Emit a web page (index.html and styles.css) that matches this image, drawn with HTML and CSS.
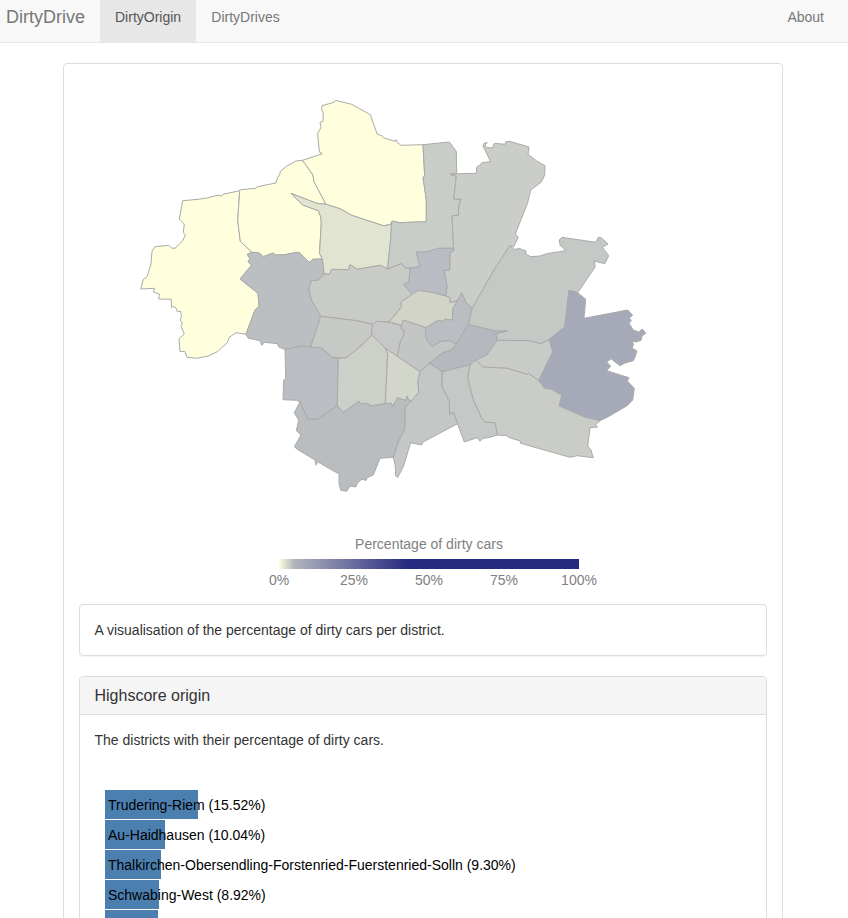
FILE: index.html
```html
<!DOCTYPE html>
<html lang="en">
<head>
<meta charset="utf-8">
<title>DirtyDrive</title>
<link rel="stylesheet" href="styles.css">
</head>
<body>
<nav class="navbar">
  <a class="brand">DirtyDrive</a>
  <a class="nav-item active">DirtyOrigin</a>
  <a class="nav-item">DirtyDrives</a>
  <a class="nav-item about">About</a>
</nav>
<main class="card">
  <svg class="map" viewBox="79 79 688 450" width="688" height="450">
    <path fill="#ffffdd" d="M182.7 200.7 179.3 219.3 184.3 224 183.3 232.7 185.5 234.7 182.7 240.7 175 248.3 171.7 248 168.7 245.3 155 246.7 152 251.3 151 264 147 276.7 143.3 279.3 140.7 289 154.7 288.3 153.3 292 159.3 294 158.7 299 171.3 299.3 171.3 307.3 173.5 306.5 176 308 177.3 311.7 180.7 311.3 181.3 316.7 180.3 320 182.7 324 180.7 325.3 184.3 334 179 338.7 180 351.7 184.7 351.3 187 357.3 196.7 358.3 208.3 356 217.3 351.7 227.3 342.7 229.3 337.3 236 332.7 246 334.3 255 310 259 306 258 293.3 240 279 251.7 265 248 261.7 250 258.7 247.3 254.3 252 252.3 240.3 241.3 237.7 220.7 239.7 190.7 223 194.3 221.7 196 217.3 195.3 207 198 198.3 199.3Z"/>
    <path fill="#ffffdd" d="M239.7 190.7 240.7 189.7 255.3 188.3 257.3 186.7 276 183 277.7 177.3 279.7 174.5 280.3 171.3 287 166 296 161 302.5 160.3 313 175 314 181.7 326 204.3 316.7 203.3 291 193.3 302.7 205 318.3 210.7 320.7 216.7 321.3 223 319.5 253.3 322.3 259 313.3 259.3 309.3 262.3 299.3 252.3 293.3 253 285 254.7 275 255 273.3 253 263.3 256.7 258.7 252.7 252 252.3 240.3 241.3 237.7 220.7Z"/>
    <path fill="#ffffdd" d="M302.5 160.3 322.3 153.7 319.3 152 317.7 133.3 321 127.3 320 122.3 323 121.3 323.3 113.3 321.7 110 322 105.7 334 102.3 335.3 100.3 351.7 104.3 370.3 114.7 377.3 134.3 382 135.7 383.3 137.7 395 141.3 396 139.7 396.7 142 401 145.3 423 144.7 424.7 176 423 177.3 425.3 192.7 426.3 200 426.3 221.7 399.3 222.7 392 221 390 224.7 383.3 225.7 351.7 215.3 340 208.7 326 204.3 314 181.7 313 175Z"/>
    <path fill="#e0e4d1" d="M326 204.3 340 208.7 351.7 215.3 383.3 225.7 390 224.7 391.7 223.3 390.3 243.3 387.5 269 380.7 265.3 357.3 269.3 350 264.7 348.3 269.7 331.7 269.3 329.3 274.3 324 274 322.3 259 319.5 253.3 321.3 223 320.7 216.7 318.3 210.7 302.7 205 291 193.3 316.7 203.3Z"/>
    <path fill="#c8cdc7" d="M423 144.7 449.3 142 456.3 151.3 456.7 173.3 450 174.3 456.3 176.3 453.7 199 461 199 459 205 458.3 215.3 452 216 453.7 248.3 438.3 248.3 426.7 252 416.3 252 420 266.7 410 268.3 404.7 267.7 401.7 263.7 387.5 269 390.3 243.3 391.7 223.3 392 221 399.3 222.7 426.3 221.7 426.3 200 423 177.3 424.7 176Z"/>
    <path fill="#cbcdc8" d="M450 174 476.3 173.3 477 166.7 480.5 165 481.5 163 484.7 162.3 490.7 161.7 483 146 484.3 143 487.3 142.7 485.3 144.5 486.3 147.7 492.7 147.7 494.3 143.3 505 144.3 506 141.7 509.5 141.3 529 147 528 154.3 536.7 161 545 165.7 544.7 175 541.3 182 530.7 190 527.7 202.7 515.3 234 518.3 237.3 513.3 247.3 510 245.7 495 268.3 482.7 290 472.3 308.3 466 302.7 461.7 292.7 457.3 300.7 450 302.7 450 297.7 445.7 296 447 286.7 444.3 270.7 449.7 270 450 252.7 453.7 250.7 452 216 458.3 215.3 459 205 461 199 453.7 199 456.3 176.3Z"/>
    <path fill="#b9bdc3" d="M416.3 252 426.7 252 438.3 248.3 453.7 248.3 453.7 250.7 449.7 252.7 449.7 270 444.3 270.7 447 286.7 445.7 296 433.3 292.7 418.3 290.3 412 294.3 403.3 284.3 408.7 282 410 268.3 420 266.7Z"/>
    <path fill="#c9cbc7" d="M324 274 318.3 280 311 280.7 308.7 290 311.7 300.7 320.7 316.3 356.7 320.7 374 324.7 376.7 322 389.3 321.7 401.7 306.7 400.7 302.3 412 294.3 403.3 284.3 408.7 282 410 268.3 404.7 267.7 401.7 263.7 387.5 269 380.7 265.3 357.3 269.3 350 264.7 348.3 269.7 331.7 269.3 329.3 274.3Z"/>
    <path fill="#bcbfc2" d="M252 252.3 258.7 252.7 263.3 256.7 273.3 253 275 255 285 254.7 293.3 253 299.3 252.3 309.3 262.3 313.3 259.3 322.3 259 324 274 318.3 280 311 280.7 308.7 290 311.7 300.7 320.7 316.3 310.5 347.3 301.7 346 285 349.5 278.3 346.7 277.7 343.7 264 342.3 262 345.3 260 340.7 248.3 338.3 246 334.3 255 310 259 306 258 293.3 240 279 251.7 265 248 261.7 250 258.7 247.3 254.3Z"/>
    <path fill="#c7c9c6" d="M320.7 316.3 356.7 320.7 374 324.7 371.7 329 371.7 335 355 350.7 346 358 331.7 357.3 323.3 348.7 310.5 347.3Z"/>
    <path fill="#c6c8c7" d="M372.7 325 376.7 321.3 390 322.7 401.7 325.3 401 328.3 404.3 330 403.7 335 400 343 397.3 356.4 385.3 348.3 371.7 335 371.7 329Z"/>
    <path fill="#d2d4c9" d="M389.3 321.7 401.7 325.3 403 320 426 327.7 438.3 320.3 443.3 321.7 444.7 319 452.3 320.3 453 308.3 457.3 300.7 450 302.7 450 297.7 445.7 296 433.3 292.7 418.3 290.3 412 294.3 400.7 302.3 401.7 306.7Z"/>
    <path fill="#c4c6c6" d="M403 320 426 327.7 426.7 340 432 346.3 440 341.7 450 340.3 456 344.3 451.7 350 442.7 352.7 429.3 363.3 420 371.7 397.3 356.4 400 343 403.7 335 404.3 330 401 328.3Z"/>
    <path fill="#babec3" d="M426 327.7 438.3 320.3 443.3 321.7 444.7 319 452.3 320.3 453 308.3 457.3 300.7 461.7 292.7 466 302.7 472.3 308.3 468.3 324.5 456 344.3 450 340.3 440 341.7 432 346.3 426.7 340 425.3 334Z"/>
    <path fill="#c5c9c5" d="M510 245.7 513.3 249.3 520 248.7 526 251 525.7 254 530.7 256.7 540 256 546.7 253.7 566 250.7 560 245 559.3 240 561.7 237.3 596 242.3 598.3 237.3 601.3 237.7 608 244 602.3 247.3 608.7 255.7 604.7 263.7 594.3 261 595.3 266.7 577.7 292.7 569 290.3 564.7 326.7 549.3 339.3 541.3 343.7 528.3 340.7 497.3 340.3 495.7 333.7 507.3 331 495 331 468.3 324.5 472.3 308.3 482.7 290 495 268.3Z"/>
    <path fill="#b5b8bf" d="M468.3 324.5 495 331 507.3 331 495.7 333.7 497.3 340.3 486.7 355 476 360 470 364.7 442.7 371.7 429.3 363.3 442.7 352.7 451.7 350 456 344.3Z"/>
    <path fill="#c9cbc8" d="M497.3 340.3 528.3 340.7 541.3 343.7 549.3 339.3 552.7 351.7 538.7 380.7 528.5 373.3 527.3 374.3 506.7 368.3 482.7 367 476 360 486.7 355Z"/>
    <path fill="#a6aab8" d="M569 290.3 577.7 292.7 585.7 299.3 584 318.3 627.7 310 632.7 315.3 629.3 318 631.3 320.7 629 323.3 633.3 330 638.7 332 642.3 329 645.7 333.3 642 336 641.3 340 636.7 342 632.3 341 633.5 344.5 632 348.3 636.7 350.7 635.5 356 633.3 360.7 625 363 620 365.7 611 358.7 606.7 362.3 610.7 366 606.7 370.7 629 377.7 627.3 381 634.3 388.3 632.7 400 626.7 406 608.3 416.7 600 420.7 585 417.3 559 406 561.7 395.3 550.7 389 544.3 388.3 538.7 380.7 552.7 351.7 549.3 339.3 564.7 326.7Z"/>
    <path fill="#cacdc7" d="M476 360 482.7 367 506.7 368.3 527.3 374.3 528.5 373.3 538.7 380.7 544.3 388.3 550.7 389 561.7 395.3 559 406 585 417.3 600 420.7 595 425.3 597.7 427 590 427.7 587.7 446 591 450 593.3 457.7 577.3 455.7 570 457.3 520.7 443.3 520.3 441 508.3 437.3 506.7 435.5 497.3 435 495 422.7 485 422.3 481.7 418.3 473.3 400 467.7 378.3 470 364.7Z"/>
    <path fill="#c4c8c7" d="M442.7 371.7 470 364.7 467.7 378.3 473.3 400 481.7 418.3 485 422.3 495 422.7 497.3 435 490 437.3 483 438.3 480 441.3 477 437.7 464.3 442 453.3 412.3 449.7 414.3 449.3 401.7 441.7 386Z"/>
    <path fill="#c3c7c6" d="M420 371.7 429.3 363.3 442 371.7 441.7 386 449.3 401.7 449.7 414.3 453.3 412.3 457.7 423.7 423 442 421.7 445 410.7 442.7 403.3 466.7 397.7 477.3 395.7 476 395.3 466 393.3 457.3 398.3 441.7 404.7 429.3 405 407.3 418.7 392.3 417.7 381.7Z"/>
    <path fill="#babdc1" d="M285 349.5 301.7 346 321.7 348 331.7 357.3 338.3 358 337.3 406 317.3 419.3 307.7 419.3 300 401.7 296.7 400.3 283 399.7 283.7 380 285.7 378.3Z"/>
    <path fill="#cdd0c8" d="M338.3 358 346 358 365 342.7 371.7 335 385.3 348.3 387.7 353.3 385.3 403.3 383.3 404 370 406 368.3 403.7 360.7 403.7 359 401.3 343.3 412.3 337.3 406Z"/>
    <path fill="#d3d6ca" d="M385.3 348.3 420 371.7 417.7 381.7 418.7 392.3 411.7 400.7 408.5 400 407 396.3 405.5 400.7 397.7 397.7 392.7 406.3 391.3 403.3 385.3 403.3 387.7 353.3Z"/>
    <path fill="#b9bdc0" d="M300 401.7 307.7 419.3 317.3 419.3 337.3 406 343.3 412.3 359 401.3 360.7 403.7 368.3 403.7 370 406 383.3 404 391.3 403.3 392.7 406.3 397.7 397.7 405.5 400.7 407 396.3 408.5 400 411.7 400.7 405 407.3 404.7 429.3 398.3 441.7 393.3 457.3 380 458.3 373.3 475 367.5 477.5 366 480.3 361.7 479.3 357.7 482.7 355.7 487 350 486 346.7 491.3 340.7 490.3 339 483.3 339 474 317.3 461.7 316 465.3 315 460 297.5 449.5 294.3 446.7 301 435 296.3 430.7 298.7 420 294.3 412.7Z"/>
  </svg>
  <div class="legend">
    <div class="legend-title">Percentage of dirty cars</div>
    <div class="scale"></div>
    <div class="ticks"><span>0%</span><span>25%</span><span>50%</span><span>75%</span><span>100%</span></div>
  </div>
  <section class="panel"><p class="panel-body">A visualisation of the percentage of dirty cars per district.</p></section>
  <section class="panel highscore">
    <h3 class="panel-title">Highscore origin</h3>
    <p class="panel-body">The districts with their percentage of dirty cars.</p>
    <div class="bars">
      <div class="bar" style="width:93.1px">Trudering-Riem (15.52%)</div>
      <div class="bar" style="width:60.2px">Au-Haidhausen (10.04%)</div>
      <div class="bar" style="width:55.8px">Thalkirchen-Obersendling-Forstenried-Fuerstenried-Solln (9.30%)</div>
      <div class="bar" style="width:53.5px">Schwabing-West (8.92%)</div>
      <div class="bar" style="width:52.6px"></div>
    </div>
  </section>
</main>
</body>
</html>
```
FILE: styles.css
```css
* { box-sizing: border-box; }
html, body { height: 100%; }
body {
  margin: 0;
  overflow: hidden;
  background: #fff;
  color: #333;
  font: 14px/20px "Liberation Sans", Arial, sans-serif;
}
.navbar {
  display: flex;
  height: 43px;
  padding: 0 9px 0 6px;
  background: #f8f8f8;
  border-bottom: 1px solid #e7e7e7;
  color: #777;
}
.brand { width: 94px; padding-top: 7px; font-size: 18px; }
.nav-item { padding: 7px 15px 15px; }
.nav-item.active { background: #e7e7e7; color: #555; width: 96.3px; }
.about { margin-left: auto; }
.card {
  width: 720px;
  height: 1200px;
  margin: 20px 0 0 63px;
  padding: 15px;
  border: 1px solid #ddd;
  border-radius: 4px;
}
.map { display: block; }
.map path { stroke: #aaa; stroke-width: 1; stroke-linejoin: round; }
.legend {
  width: 300px;
  height: 75px;
  margin-left: 200px;
  padding-top: 5px;
  color: #808080;
  text-align: center;
}
.legend-title { height: 25px; }
.scale {
  height: 10px;
  background: linear-gradient(to right, #ffffdd 0%, #b1b4bd 5%, #262a80 43%, #262a80 100%);
}
.ticks { display: flex; justify-content: space-between; margin: 1px -30px 0; }
.ticks span { width: 60px; }
.panel {
  height: 52px;
  margin-bottom: 20px;
  border: 1px solid #ddd;
  border-radius: 4px;
  box-shadow: 0 1px 1px rgba(0, 0, 0, .05);
}
.panel-body { margin: 0; padding: 15px 14.5px; }
.highscore { height: 520px; }
.panel-title {
  height: 38px;
  margin: 0;
  padding: 9px 14.5px 8px;
  border-bottom: 1px solid #ddd;
  border-radius: 3px 3px 0 0;
  background: #f5f5f5;
  font-size: 16px;
  font-weight: 400;
}
.bars { display: grid; gap: 1px; margin: 25px 0 0 25px; }
.bar {
  height: 29px;
  padding-left: 3px;
  background: #4b7fb0;
  color: #000;
  line-height: 30px;
  white-space: nowrap;
}
```
